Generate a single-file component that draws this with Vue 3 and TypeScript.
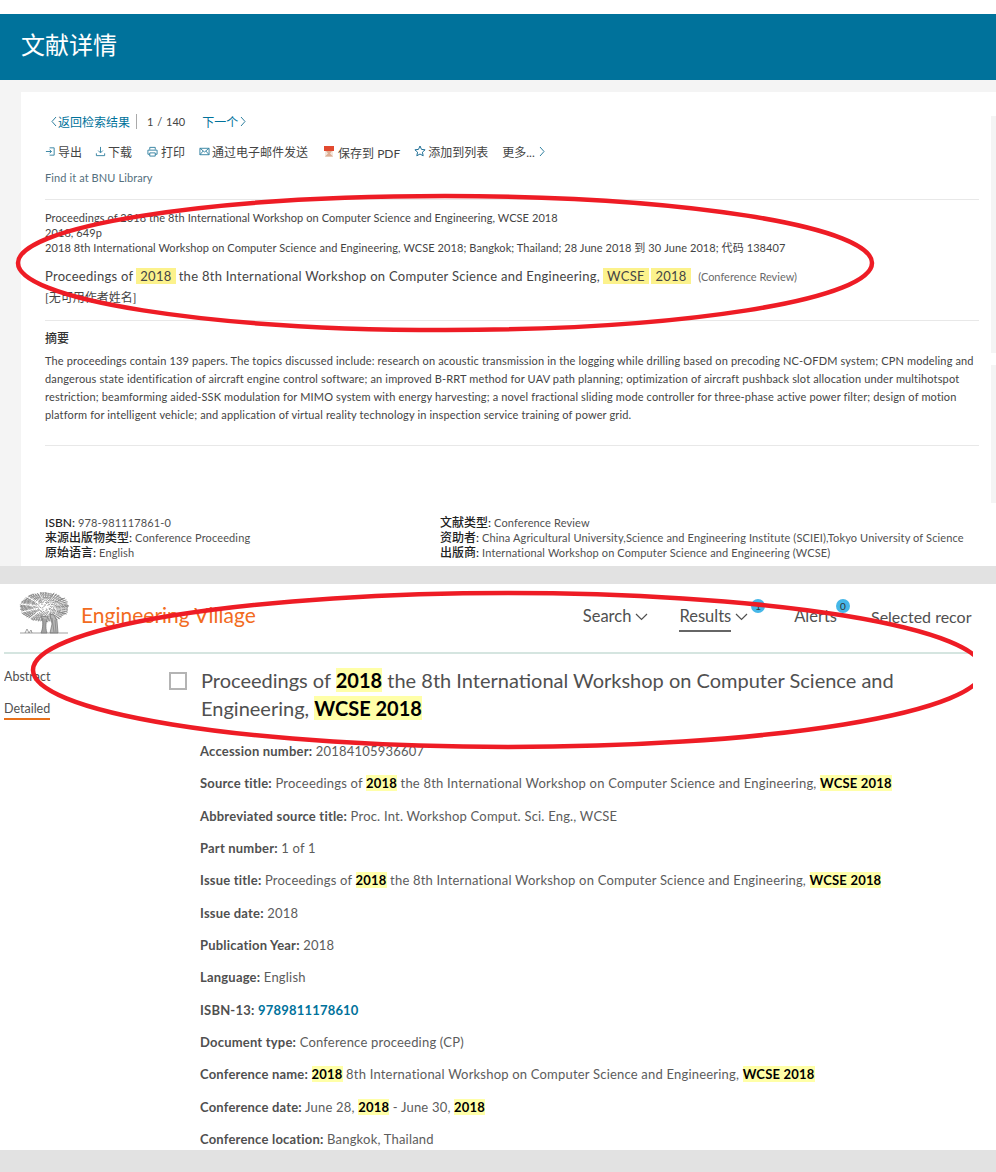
<script setup lang="ts">
type Part = { text: string; mark?: boolean; link?: boolean }
type Row = { label: string; parts: Part[] }

const t = (text: string): Part => ({ text })
const m = (text: string): Part => ({ text, mark: true })

const rows: Row[] = [
  { label: 'Accession number:', parts: [t('20184105936607')] },
  { label: 'Source title:', parts: [t('Proceedings of '), m('2018'), t(' the 8th International Workshop on Computer Science and Engineering, '), m('WCSE 2018')] },
  { label: 'Abbreviated source title:', parts: [t('Proc. Int. Workshop Comput. Sci. Eng., WCSE')] },
  { label: 'Part number:', parts: [t('1 of 1')] },
  { label: 'Issue title:', parts: [t('Proceedings of '), m('2018'), t(' the 8th International Workshop on Computer Science and Engineering, '), m('WCSE 2018')] },
  { label: 'Issue date:', parts: [t('2018')] },
  { label: 'Publication Year:', parts: [t('2018')] },
  { label: 'Language:', parts: [t('English')] },
  { label: 'ISBN-13:', parts: [{ text: '9789811178610', link: true }] },
  { label: 'Document type:', parts: [t('Conference proceeding (CP)')] },
  { label: 'Conference name:', parts: [m('2018'), t(' 8th International Workshop on Computer Science and Engineering, '), m('WCSE 2018')] },
  { label: 'Conference date:', parts: [t('June 28, '), m('2018'), t(' - June 30, '), m('2018')] },
  { label: 'Conference location:', parts: [t('Bangkok, Thailand')] },
]

const abstractLines = [
  'The proceedings contain 139 papers. The topics discussed include: research on acoustic transmission in the logging while drilling based on precoding NC-OFDM system; CPN modeling and',
  'dangerous state identification of aircraft engine control software; an improved B-RRT method for UAV path planning; optimization of aircraft pushback slot allocation under multihotspot',
  'restriction; beamforming aided-SSK modulation for MIMO system with energy harvesting; a novel fractional sliding mode controller for three-phase active power filter; design of motion',
  'platform for intelligent vehicle; and application of virtual reality technology in inspection service training of power grid.',
]

// little strokes that make up the engraved tree crown
const crown = Array.from({ length: 560 }, (_, i) => {
  const a = i * 2.399
  const r = Math.pow(i / 560, 0.35)
  const x = 24.5 + Math.cos(a) * r * 24
  const y = 15 + Math.sin(a) * r * 14.5
  return `M${x.toFixed(1)} ${y.toFixed(1)}l${(1.2 + (i % 3) * 0.5).toFixed(1)} ${((i % 5) - 2) * 0.6}`
}).join('')
</script>

<template>
  <div class="page">
    <div class="top-space"></div>
    <header class="doc-head">文献详情</header>
    <div class="doc-wrap">
      <main class="doc-card">
        <div class="pager">
          <svg viewBox="0 0 6 11" class="pager-chev"><path d="M5 1 1 5.500 5 10" /></svg>
          <span class="link">返回检索结果</span>
          <span class="pager-sep"></span>
          <span class="pager-num">1 / 140</span>
          <span class="link next">下一个</span>
          <svg viewBox="0 0 6 11" class="pager-chev after"><path d="m1 1 4 4.500L1 10" /></svg>
        </div>
        <div class="actions">
          <span class="action">
            <svg viewBox="0 0 12 12" class="ico"><path d="M5 2h5v8H5M1 6h6M5 4l2 2-2 2" /></svg>导出
          </span>
          <span class="action">
            <svg viewBox="0 0 12 12" class="ico"><path d="M6 1v6M3.500 5 6 7.500 8.500 5M1.500 8v2.500h9V8" /></svg>下载
          </span>
          <span class="action print">
            <svg viewBox="0 0 12 12" class="ico"><path d="M3 4V1.500h6V4M3 9H1V4.500h10V9H9M3 7.500h6V11H3z" /></svg>打印
          </span>
          <span class="action">
            <svg viewBox="0 0 12 12" class="ico"><path d="M1 2.500h10v7H1zM1 2.500l5 4 5-4M1 9.500l3.500-4M11 9.500l-3.500-4" /></svg>通过电子邮件发送
          </span>
          <span class="action pdf">
            <svg viewBox="0 0 12 12" class="ico-pdf"><rect x="1" y="0" width="10" height="5" fill="#e2492f" /><path d="M2 5h8v6H2z" fill="#f3e6dc" /><path d="M3 5h6L7 7.500 10 10.500H2L5 7.500z" fill="#dcae94" /></svg>保存到 PDF
          </span>
          <span class="action">
            <svg viewBox="0 0 12 12" class="ico star"><path d="m6 1 1.500 3.400 3.600.4-2.700 2.400.8 3.600L6 9l-3.200 1.800.8-3.600L.9 4.800l3.600-.4z" /></svg>添加到列表
          </span>
          <span class="action">更多...<svg viewBox="0 0 6 11" class="pager-chev after"><path d="m1 1 4 4.500L1 10" /></svg></span>
        </div>
        <div class="find-it">Find it at BNU Library</div>

        <section class="source">
          <div>Proceedings of 2018 the 8th International Workshop on Computer Science and Engineering, WCSE 2018</div>
          <div>2018, 649p</div>
          <div>2018 8th International Workshop on Computer Science and Engineering, WCSE 2018; Bangkok; Thailand; 28 June 2018 到 30 June 2018; 代码 138407</div>
        </section>
        <h2 class="doc-title">
          Proceedings of <span class="hl">2018</span> the 8th International Workshop on Computer Science and Engineering, <span class="hl">WCSE</span> <span class="hl">2018</span>
          <small>(Conference Review)</small>
        </h2>
        <div class="author">[无可用作者姓名]</div>

        <section class="abstract">
          <h3>摘要</h3>
          <p v-for="line in abstractLines" :key="line">{{ line }}</p>
        </section>

        <section class="meta">
          <div class="meta-col">
            <div>ISBN: <span>978-981117861-0</span></div>
            <div>来源出版物类型: <span>Conference Proceeding</span></div>
            <div>原始语言: <span>English</span></div>
          </div>
          <div class="meta-col">
            <div>文献类型: <span>Conference Review</span></div>
            <div>资助者: <span>China Agricultural University,Science and Engineering Institute (SCIEI),Tokyo University of Science</span></div>
            <div>出版商: <span>International Workshop on Computer Science and Engineering (WCSE)</span></div>
          </div>
        </section>
      </main>
      <i class="strip strip-a"></i>
      <i class="strip strip-b"></i>
    </div>

    <div class="divider"></div>

    <div class="ev">
      <div class="ev-inner">
        <nav class="ev-nav">
          <svg viewBox="0 0 50 44" class="tree">
            <path :d="crown" />
            <path class="trunk" d="M22 24c3 5 2 12 0 17h6c-2-6-1-12 1-16zM31 22l4 1 3 6 1 12h-8l2-9z" />
            <path d="M24 26v14M26 27v13M33 26l2 14M36 28l1 12M1 41h48M6 41l2-4 2 4 2-3 1 3" />
          </svg>
          <span class="brand">Engineering Village</span>
          <span class="nav-items">
            <span class="nav-item search">Search<svg viewBox="0 0 13 8" class="chev"><path d="m1 1 5.500 5.500L12 1" /></svg></span>
            <span class="nav-item results"><span class="active">Results</span><svg viewBox="0 0 13 8" class="chev"><path d="m1 1 5.500 5.500L12 1" /></svg><i class="badge badge-results">1</i></span>
            <span class="nav-item alerts">Alerts<i class="badge badge-alerts">0</i></span>
            <span class="nav-item selected">Selected recor</span>
          </span>
        </nav>
        <div class="ev-body">
          <aside class="ev-side">
            <div>Abstract</div>
            <div class="on">Detailed</div>
          </aside>
          <span class="check"></span>
          <div class="ev-main">
            <h1 class="ev-title">
              <span>Proceedings of <mark>2018</mark> the 8th International Workshop on Computer Science and</span>
              <span>Engineering, <mark>WCSE 2018</mark></span>
            </h1>
            <div v-for="row in rows" :key="row.label" class="ev-row">
              <b>{{ row.label }}</b>{{ ' ' }}<template v-for="(p, i) in row.parts" :key="i"><mark v-if="p.mark">{{ p.text }}</mark><b v-else-if="p.link" class="isbn">{{ p.text }}</b><template v-else>{{ p.text }}</template></template>
            </div>
          </div>
        </div>
      </div>
    </div>
    <div class="bottom"></div>

    <svg class="scribble" viewBox="0 0 996 1172" width="996" height="1172">
      <ellipse cx="445" cy="263" rx="427" ry="67" />
      <clipPath id="ev-clip"><rect x="0" y="584" width="973" height="566" /></clipPath>
      <ellipse clip-path="url(#ev-clip)" cx="508" cy="670" rx="475" ry="77" />
    </svg>
  </div>
</template>

<style scoped>
.page {
  position: relative;
  width: 996px;
  height: 1172px;
  overflow: hidden;
  background: #fff;
  font-family: Lato, "Noto Sans CJK SC", sans-serif;
  color: #505050;
}
.top-space {
  height: 14px;
}
.doc-head {
  height: 66px;
  padding-left: 21px;
  background: #00729b;
  color: #fff;
  font-size: 24px;
  line-height: 62px;
}
.doc-wrap {
  position: relative;
  height: 486px;
  padding: 12px 0 0 21px;
  box-sizing: border-box;
  background: #f4f4f4;
}
.doc-card {
  height: 474px;
  padding: 19px 17px 0 24px;
  box-sizing: border-box;
  background: #fff;
  font-size: 11px;
  color: #444;
}
.strip {
  position: absolute;
  right: 0;
  width: 5px;
  background: #f4f4f4;
}
.strip-a {
  top: 36px;
  height: 237px;
}
.strip-b {
  top: 285px;
  height: 138px;
}
.pager {
  display: flex;
  align-items: center;
  height: 20px;
  padding-left: 6px;
  font-size: 12px;
}
.pager-chev {
  flex: none;
  width: 6px;
  height: 11px;
  margin-right: 1px;
  fill: none;
  stroke: #2f7f9f;
  stroke-width: 1;
}
.pager-chev.after {
  margin: 0 0 0 2px;
}
.link {
  color: #00729b;
}
.pager-sep {
  width: 1px;
  height: 15px;
  margin: 0 10px 0 6px;
  background: #aaa;
}
.pager-num {
  font-size: 11px;
  word-spacing: 1px;
}
.next {
  margin-left: 17px;
}
.actions {
  display: flex;
  align-items: center;
  gap: 14px;
  height: 20px;
  margin-top: 10px;
  font-size: 12px;
}
.action {
  display: flex;
  align-items: center;
  gap: 2px;
}
.action:first-child {
  margin-right: -1px;
}
.print {
  margin-left: 1px;
  gap: 3px;
}
.ico {
  width: 11px;
  height: 11px;
  fill: none;
  stroke: #2f7f9f;
  stroke-width: 1;
}
.star {
  width: 12px;
  height: 12px;
  stroke: #1f6f96;
}
.ico-pdf {
  width: 12px;
  height: 12px;
  margin-right: 1px;
}
.pdf {
  margin-top: 2px;
  margin-left: 1px;
}
.find-it {
  margin-top: 10px;
  line-height: 14px;
  letter-spacing: 0.1px;
  color: #54707e;
}
.source {
  margin-top: 14px;
  padding-top: 10px;
  border-top: 1px solid #e8e8e8;
  line-height: 15px;
  letter-spacing: 0.08px;
}
.doc-title {
  margin: 13px 0 0;
  font-size: 13px;
  font-weight: 400;
  line-height: 16px;
  letter-spacing: 0.28px;
}
.doc-title small {
  margin-left: 8px;
  font-size: 11px;
  color: #6a6a6a;
  letter-spacing: 0;
}
.hl {
  margin: 0 -0.5px;
  padding: 0 4px;
  background: #fcf28c;
}
.author {
  margin-top: 5px;
  font-size: 12px;
  line-height: 16px;
}
.abstract {
  height: 126px;
  margin-top: 14px;
  padding-top: 10px;
  box-sizing: border-box;
  border-top: 1px solid #e8e8e8;
  border-bottom: 1px solid #e8e8e8;
}
.abstract h3 {
  margin: 0 0 5px;
  font-size: 12px;
  font-weight: 500;
  line-height: 16px;
  color: #333;
}
.abstract p {
  margin: 0;
  line-height: 18px;
  letter-spacing: 0.15px;
  white-space: nowrap;
}
.meta {
  display: flex;
  margin-top: 69px;
  line-height: 15px;
}
.meta-col {
  white-space: nowrap;
}
.meta-col:first-child {
  width: 395px;
}
.meta-col div {
  font-size: 12px;
  font-weight: 500;
  color: #222;
}
.meta-col span {
  font-size: 11px;
  font-weight: 400;
  letter-spacing: 0.13px;
  color: #505050;
}
.divider {
  height: 18px;
  background: #e2e2e2;
}
.ev {
  height: 566px;
  padding-left: 4px;
  background: #fff;
}
.ev-inner {
  width: 969px;
  height: 566px;
  overflow: hidden;
}
.ev-nav {
  display: flex;
  align-items: center;
  height: 68px;
  padding-left: 15px;
  border-bottom: 2px solid #d5e5e0;
}
.tree {
  flex: none;
  width: 50px;
  height: 44px;
  margin-bottom: 8px;
  fill: none;
  stroke: #7a7a7a;
  stroke-width: 0.7;
}
.trunk {
  fill: #b8b8b8;
  stroke: #707070;
}
.brand {
  flex: none;
  margin: 0 0 8px 12px;
  font-size: 21px;
  color: #f26b21;
}
.nav-items {
  display: flex;
  margin: 0 0 4px 327px;
  font-size: 16.500px;
  white-space: nowrap;
}
.nav-item {
  position: relative;
  display: inline-flex;
  align-items: center;
  gap: 4px;
}
.results {
  margin-left: 31px;
}
.alerts {
  margin-left: 46px;
}
.selected {
  margin-left: 34px;
  font-size: 16px;
}
.active {
  padding-bottom: 4px;
  border-bottom: 2px solid #666;
  margin-bottom: -6px;
}
.chev {
  flex: none;
  width: 13px;
  height: 8px;
  margin-top: 2px;
  fill: none;
  stroke: #505050;
  stroke-width: 1.200;
}
.badge {
  position: absolute;
  top: -7px;
  width: 14px;
  height: 14px;
  border-radius: 50%;
  background: #45b7e8;
  color: #333;
  font-size: 10px;
  font-style: normal;
  line-height: 14px;
  text-align: center;
}
.badge-results {
  right: -17px;
}
.badge-alerts {
  right: -13px;
}
.ev-body {
  display: flex;
  margin-top: 1px;
}
.ev-side {
  width: 165px;
  padding-top: 14px;
  font-size: 12.500px;
  line-height: 16px;
}
.ev-side div {
  width: max-content;
  margin-bottom: 16px;
}
.ev-side .on {
  padding-bottom: 1px;
  border-bottom: 2px solid #e8701a;
}
.check {
  flex: none;
  width: 14px;
  height: 14px;
  margin: 17px 13px 0 0;
  border: 2px solid #b4b4b4;
}
.ev-main {
  flex: 1;
  min-width: 0;
}
.ev-title {
  margin: 11px 0 20px;
  padding-left: 1px;
  font-size: 20px;
  font-weight: 400;
  line-height: 28px;
  white-space: nowrap;
  color: #505050;
}
.ev-title span {
  display: block;
}
mark {
  background: #ffffa8;
  color: #000;
  font-weight: 700;
}
.ev-row {
  height: 32.330px;
  font-size: 13px;
  line-height: 18px;
  letter-spacing: 0.2px;
  white-space: nowrap;
  color: #5c5c5c;
}
.ev-row b {
  font-weight: 700;
  color: #505050;
}
.ev-row b.isbn {
  color: #00729b;
}
.bottom {
  height: 22px;
  background: #e2e2e2;
}
.scribble {
  position: absolute;
  top: 0;
  left: 0;
  pointer-events: none;
}
.scribble ellipse {
  fill: none;
  stroke: #ee1c25;
  stroke-width: 4.500;
}
</style>
